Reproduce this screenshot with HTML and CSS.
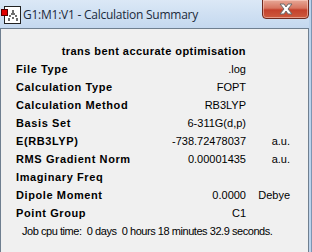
FILE: index.html
```html
<!DOCTYPE html>
<html lang="en">
<head>
    <meta charset="UTF-8">
    <title>G1:M1:V1 - Calculation Summary</title>
    <link rel="stylesheet" href="styles.css">
</head>
<body>
    <div class="window">
        <div class="titlebar">
            <svg class="app-icon" width="22" height="22" viewBox="0 0 22 22">
                <rect x="4.5" y="2.5" width="16" height="17" fill="#fff" stroke="#222"/>
                <rect x="1.5" y="5.5" width="6" height="6" fill="#e00000" stroke="#500"/>
                <g fill="#6e6e6e">
                    <rect x="12" y="6" width="2" height="3"/>
                    <rect x="11" y="9" width="4" height="2"/>
                    <rect x="9" y="11" width="2" height="2"/>
                    <rect x="15" y="11" width="2" height="2"/>
                    <rect x="8" y="14" width="2" height="3"/>
                    <rect x="16" y="14" width="2" height="3"/>
                    <rect x="12" y="13" width="2" height="2"/>
                </g>
            </svg>
            <span class="title">G1:M1:V1 - Calculation Summary</span>
            <div class="close-btn">
                <svg width="18" height="12" viewBox="0 0 18 12">
                    <path d="M3 1 L7 1 L9 4 L11 1 L15 1 L11 6 L15 11 L11 11 L9 8 L7 11 L3 11 L7 6 Z" fill="#fff" stroke="#6b6b6b" stroke-width="1"/>
                </svg>
            </div>
        </div>
        <div class="panel">
            <div class="heading">trans bent accurate optimisation</div>
            <div class="row"><span class="label">File Type</span><span class="value">.log</span><span class="unit"></span></div>
            <div class="row"><span class="label">Calculation Type</span><span class="value">FOPT</span><span class="unit"></span></div>
            <div class="row"><span class="label">Calculation Method</span><span class="value">RB3LYP</span><span class="unit"></span></div>
            <div class="row"><span class="label">Basis Set</span><span class="value">6-311G(d,p)</span><span class="unit"></span></div>
            <div class="row"><span class="label">E(RB3LYP)</span><span class="value">-738.72478037</span><span class="unit">a.u.</span></div>
            <div class="row"><span class="label">RMS Gradient Norm</span><span class="value">0.00001435</span><span class="unit">a.u.</span></div>
            <div class="row"><span class="label">Imaginary Freq</span><span class="value"></span><span class="unit"></span></div>
            <div class="row"><span class="label">Dipole Moment</span><span class="value">0.0000</span><span class="unit">Debye</span></div>
            <div class="row"><span class="label">Point Group</span><span class="value">C1</span><span class="unit"></span></div>
            <div class="cpu">Job cpu time:  0 days  0 hours 18 minutes 32.9 seconds.</div>
        </div>
    </div>
</body>
</html>
```

FILE: styles.css
```css
body {
    margin: 0;
    font-family: "Liberation Sans", Arial, sans-serif;
}
.window {
    width: 312px;
    height: 252px;
    box-sizing: border-box;
    padding-right: 2px;
    background: #bcd3ec;
    border-right: 1px solid #7d95b3;
    display: flex;
    flex-direction: column;
    overflow: hidden;
}
.titlebar {
    height: 28px;
    display: flex;
    align-items: flex-start;
    background: linear-gradient(#dbe8f6, #c4d8ef);
}
.app-icon {
    margin: 4px 0 0 0;
    flex: none;
}
.title {
    margin: 6px 0 0 1px;
    font-family: "Open Sans", "Noto Sans", sans-serif;
    font-size: 12px;
    letter-spacing: -0.25px;
    color: #1b2a3c;
    flex: 1;
}
.close-btn {
    width: 45px;
    height: 18px;
    margin-top: -1px;
    border: 1px solid #6e2a1f;
    border-radius: 0 0 4px 4px;
    background: linear-gradient(#e7a897 0%, #d77560 45%, #c4412c 55%, #cd5a3e 100%);
    box-shadow: inset 0 0 0 1px rgba(255, 220, 210, 0.5);
    display: flex;
    align-items: center;
    justify-content: center;
}
.panel {
    flex: 1;
    background: #f0f0f0;
    border: 1px solid #6f7f90;
    border-bottom: none;
    padding: 13px 0 0 15px;
    font-size: 11px;
    color: #000;
}
.heading {
    width: 230px;
    text-align: right;
    font-weight: bold;
    letter-spacing: 0.45px;
    line-height: 18px;
}
.row {
    display: grid;
    grid-template-columns: 130px 100px 44px;
    line-height: 18px;
}
.label {
    font-weight: bold;
    letter-spacing: 0.6px;
    white-space: nowrap;
}
.value,
.unit {
    text-align: right;
}
.cpu {
    padding-left: 6px;
    line-height: 18px;
    letter-spacing: -0.45px;
    white-space: pre;
}
```
